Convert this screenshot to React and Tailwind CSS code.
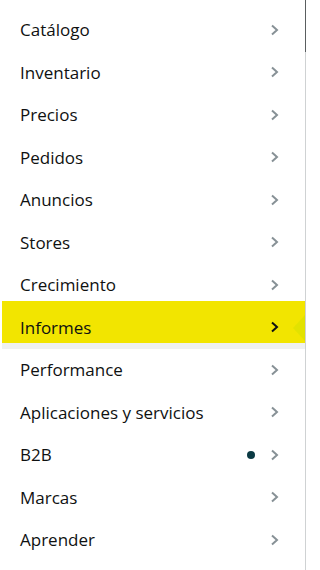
import React from 'react';

const items = [
  'Catálogo',
  'Inventario',
  'Precios',
  'Pedidos',
  'Anuncios',
  'Stores',
  'Crecimiento',
  'Informes',
  'Performance',
  'Aplicaciones y servicios',
  'B2B',
  'Marcas',
  'Aprender',
];

const Chevron = ({ active }) => (
  <svg width="9" height="12" viewBox="0 0 9 12" className="shrink-0">
    <polyline
      points="2,1.5 7,6 2,10.5"
      fill="none"
      stroke={active ? '#0f1111' : '#879196'}
      strokeWidth="2"
    />
  </svg>
);

export default function App() {
  return (
    <div className="w-[320px] h-[570px] bg-white overflow-hidden" style={{ fontFamily: '"Open Sans", "Liberation Sans", sans-serif' }}>
      <div className="relative w-[306px] h-full border-r border-[#cfd2d3] pt-[3px]">
        {/* darker top segment of the divider */}
        <div className="absolute right-[-1px] top-0 w-px h-[52px] bg-[#5a5e60]" />
        {items.map((label) => {
          const active = label === 'Informes';
          return (
            <div
              key={label}
              className={
                active
                  ? 'relative h-[42.5px] ml-[2px] pl-[18px] pr-[26px] pt-[11px] flex items-center justify-between bg-[#f2e500] shadow-[0_6px_0_#eff1f1]'
                  : 'relative h-[42.5px] ml-[2px] pl-[18px] pr-[26px] pt-[11px] flex items-center justify-between'
              }
            >
              <span className="text-[17px] text-[#0f1111] leading-none">{label}</span>
              <div className="flex items-center gap-[15px]">
                {label === 'B2B' && <span className="w-[8px] h-[8px] rounded-full bg-[#0b3a44]" />}
                <Chevron active={active} />
              </div>
              {active && (
                <svg width="12" height="26" viewBox="0 0 12 26" className="absolute right-0 top-[14px]">
                  <polygon points="12,0 0,13 12,26" fill="#e2e200" />
                </svg>
              )}
            </div>
          );
        })}
      </div>
    </div>
  );
}
